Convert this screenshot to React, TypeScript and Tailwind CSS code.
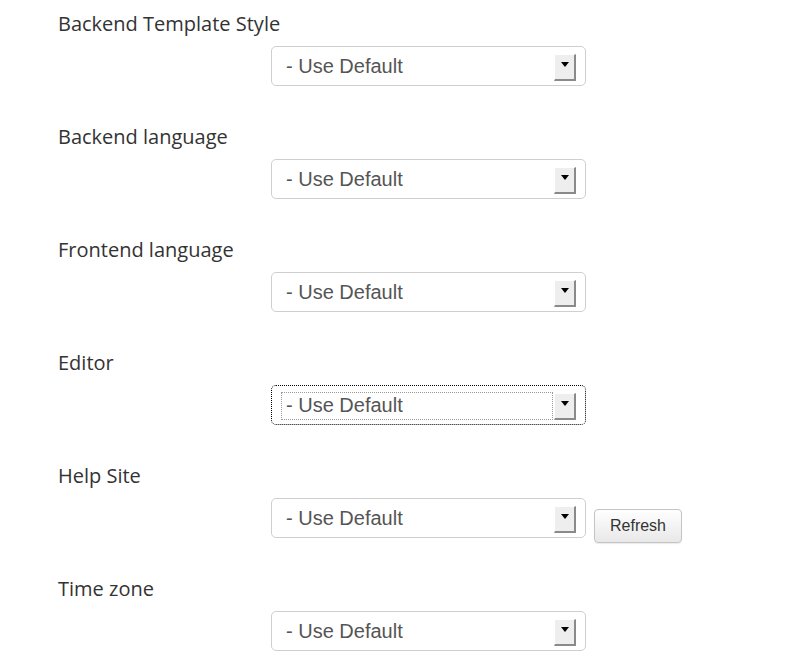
import React from 'react';

const rows = [
    { label: 'Backend Template Style' },
    { label: 'Backend language' },
    { label: 'Frontend language' },
    { label: 'Editor', focused: true },
    { label: 'Help Site', refresh: true },
    { label: 'Time zone' },
];

function ArrowButton() {
    return (
        <div className="absolute right-[9px] top-[7px] w-[22px] h-[27px] bg-[#eeeeee] border-t border-l border-t-white border-l-white border-r-2 border-b-2 border-r-[#8a8a8a] border-b-[#8a8a8a] flex justify-center pt-[7px]">
            <div className="w-0 h-0 border-l-[4px] border-r-[4px] border-t-[5px] border-l-transparent border-r-transparent border-t-black" />
        </div>
    );
}

function FakeSelect({ focused }: { focused?: boolean }) {
    return (
        <div
            className={
                focused
                    ? 'relative w-[315px] h-[40px] bg-white rounded-[5px] border border-dotted border-black'
                    : 'relative w-[315px] h-[40px] bg-white rounded-[5px] border border-[#cfcfcf]'
            }
        >
            {focused && (
                <div className="absolute left-[9px] top-[6px] w-[272px] h-[28px] border border-dotted border-[#9a9a9a]" />
            )}
            <div className="pl-[14px] h-full flex items-center text-[20px] text-[#555555]" style={{ fontFamily: '"Liberation Sans", Arial, sans-serif' }}>
                - Use Default
            </div>
            <ArrowButton />
        </div>
    );
}

export default function App() {
    return (
        <div className="bg-white w-[800px] h-[658px] overflow-hidden pl-[58px] pt-[12px]">
            {rows.map((row) => (
                <div key={row.label} className="mb-[39px]">
                    <div className="h-[24px] leading-[24px] text-[20px] text-[#333333]" style={{ fontFamily: '"Open Sans", sans-serif' }}>
                        {row.label}
                    </div>
                    <div className="mt-[10px] ml-[213px] h-[40px] flex items-start gap-[8px]">
                        <FakeSelect focused={row.focused} />
                        {row.refresh && (
                            <button
                                className="mt-[11px] w-[88px] h-[34px] shrink-0 rounded-[4px] border border-[#c4c4c4] bg-gradient-to-b from-white to-[#e8e8e8] text-[16px] text-[#333333] shadow-[0_1px_1px_rgba(0,0,0,0.08)]"
                                style={{ fontFamily: '"Liberation Sans", Arial, sans-serif' }}
                            >
                                Refresh
                            </button>
                        )}
                    </div>
                </div>
            ))}
        </div>
    );
}
